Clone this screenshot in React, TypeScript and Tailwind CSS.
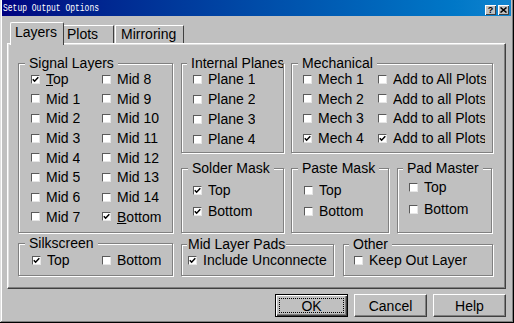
import React from "react";

type ItemProps = { label: React.ReactNode; on?: boolean; clip?: string };

function Box({ on }: { on?: boolean }) {
  return (
    <span className="flex items-center justify-center w-[9px] h-[9px] shrink-0 bg-white border border-t-[#5a5a5a] border-l-[#5a5a5a] border-b-[#e6e6e6] border-r-[#e6e6e6]">
      {on && (
        <svg width="7" height="7" viewBox="0 0 7 7">
          <path d="M0.8 3.2 L2.6 5.2 L6.3 1.2" stroke="#000" strokeWidth="1.5" fill="none" />
        </svg>
      )}
    </span>
  );
}

function Item({ label, on, clip }: ItemProps) {
  return (
    <div className="flex items-center h-4 gap-[6px]">
      <Box on={on} />
      <span className={`whitespace-nowrap overflow-hidden leading-4 ${clip ?? ""}`}>{label}</span>
    </div>
  );
}

function Group({
  title,
  cls,
  legendCls,
  children,
}: {
  title: string;
  cls: string;
  legendCls: string;
  children: React.ReactNode;
}) {
  return (
    <fieldset
      className={`min-w-0 shrink-0 border border-[#808080] shadow-[inset_1px_1px_0_#fff,1px_1px_0_#fff] ${cls}`}
    >
      <legend className={`leading-4 bg-[#c0c0c0] whitespace-nowrap overflow-hidden ${legendCls}`}>{title}</legend>
      {children}
    </fieldset>
  );
}

export default function App() {
  return (
    <div className="w-[514px] h-[323px] bg-[#c0c0c0] overflow-hidden font-['Liberation_Sans',Arial,sans-serif] text-[14px] text-black shadow-[inset_-1px_-1px_0_#000,inset_1px_0_0_#dfdfdf,inset_-2px_-2px_0_#808080,inset_2px_0_0_#fff]">
      {/* title bar */}
      <div className="ml-[2px] mr-[3px] h-[16px] bg-linear-to-r from-[#000080] to-[#1084d0] flex items-end justify-between">
        <span className="pl-[1px] pb-[2px] text-white text-[8px] leading-[8px] font-['Liberation_Mono',monospace] scale-y-[1.3] origin-bottom">
          Setup Output Options
        </span>
        <div className="flex gap-[2px] mr-[2px] pb-[1px]">
          <div className="w-[11px] h-[10px] bg-[#c0c0c0] flex items-center justify-center text-[9px] leading-none font-bold shadow-[inset_1px_1px_0_#fff,inset_-1px_-1px_0_#404040]">
            ?
          </div>
          <div className="w-[11px] h-[10px] bg-[#c0c0c0] flex items-center justify-center shadow-[inset_1px_1px_0_#fff,inset_-1px_-1px_0_#404040]">
            <svg width="7" height="6" viewBox="0 0 7 6">
              <path d="M0.5 0.5 L6.5 5.5 M6.5 0.5 L0.5 5.5" stroke="#000" strokeWidth="1.5" />
            </svg>
          </div>
        </div>
      </div>

      {/* tabs */}
      <div className="flex items-end ml-[10px] mt-[6px] -mb-[2px]">
        <div className="relative z-10 w-[54px] h-[23px] bg-[#c0c0c0] border-t border-l border-white border-r border-r-[#404040] rounded-t-[2px] pl-[4px] pt-[1px] leading-4">
          Layers
        </div>
        <div className="w-[50px] h-[18px] border-t border-white border-r border-r-[#404040] pl-[3px] leading-4 mb-[2px]">
          Plots
        </div>
        <div className="ml-[1px] w-[69px] h-[18px] border-t border-l border-white border-r border-r-[#404040] pl-[5px] leading-4 mb-[2px]">
          Mirroring
        </div>
      </div>

      {/* panel */}
      <div className="ml-[7px] w-[499px] h-[246px] border border-t-white border-l-white border-r-[#404040] border-b-[#404040] shadow-[inset_-1px_-1px_0_#808080,inset_1px_1px_0_#dfdfdf] flex pl-[10px] pt-[11px]">
        {/* left column */}
        <div className="flex flex-col w-[155px]">
          <Group title="Signal Layers" cls="w-[155px] h-[178px]" legendCls="ml-[6px] px-[4px]">
            <div className="flex ml-[12px]">
              <div className="flex flex-col gap-[3.7px] w-[71px]">
                <Item label={<><u>T</u>op</>} on />
                <Item label="Mid 1" />
                <Item label="Mid 2" />
                <Item label="Mid 3" />
                <Item label="Mid 4" />
                <Item label="Mid 5" />
                <Item label="Mid 6" />
                <Item label="Mid 7" />
              </div>
              <div className="flex flex-col gap-[3.7px]">
                <Item label="Mid 8" />
                <Item label="Mid 9" />
                <Item label="Mid 10" />
                <Item label="Mid 11" />
                <Item label="Mid 12" />
                <Item label="Mid 13" />
                <Item label="Mid 14" />
                <Item label={<><u>B</u>ottom</>} on />
              </div>
            </div>
          </Group>
          <Group title="Silkscreen" cls="mt-[2px] w-[155px] h-[41px]" legendCls="ml-[6px] px-[4px]">
            <div className="flex ml-[13px] mt-[1px]">
              <div className="w-[70px]">
                <Item label="Top" on />
              </div>
              <Item label="Bottom" />
            </div>
          </Group>
        </div>

        {/* right column */}
        <div className="flex flex-col ml-[8px]">
          <div className="flex gap-[7px]">
            <Group title="Internal Planes" cls="w-[103px] h-[98px]" legendCls="ml-[5px] px-[4px] max-w-[96px]">
              <div className="flex flex-col gap-[4px] ml-[11px]">
                <Item label="Plane 1" />
                <Item label="Plane 2" />
                <Item label="Plane 3" />
                <Item label="Plane 4" />
              </div>
            </Group>
            <Group title="Mechanical" cls="w-[202px] h-[98px]" legendCls="ml-[6px] px-[4px]">
              <div className="flex ml-[11px]">
                <div className="flex flex-col gap-[3.7px] w-[75px]">
                  <Item label="Mech 1" />
                  <Item label="Mech 2" />
                  <Item label="Mech 3" />
                  <Item label="Mech 4" on />
                </div>
                <div className="flex flex-col gap-[3.7px]">
                  <Item label="Add to All Plots" clip="w-[93px]" />
                  <Item label="Add to all Plots" clip="w-[92px]" />
                  <Item label="Add to all Plots" clip="w-[92px]" />
                  <Item label="Add to all Plots" clip="w-[92px]" on />
                </div>
              </div>
            </Group>
          </div>

          <div className="flex mt-[7px]">
            <Group title="Solder Mask" cls="w-[103px] h-[73px]" legendCls="ml-[6px] px-[4px]">
              <div className="flex flex-col gap-[5px] ml-[11px] mt-[6px]">
                <Item label="Top" on />
                <Item label="Bottom" on />
              </div>
            </Group>
            <Group title="Paste Mask" cls="ml-[7px] w-[98px] h-[73px]" legendCls="ml-[6px] px-[4px]">
              <div className="flex flex-col gap-[5px] ml-[12px] mt-[6px]">
                <Item label="Top" />
                <Item label="Bottom" />
              </div>
            </Group>
            <Group title="Pad Master" cls="ml-[8px] w-[95px] h-[73px]" legendCls="ml-[5px] px-[4px]">
              <div className="flex flex-col gap-[6px] ml-[11px] mt-[3px]">
                <Item label="Top" />
                <Item label="Bottom" />
              </div>
            </Group>
          </div>

          <div className="flex mt-[3px]">
            <Group title="Mid Layer Pads" cls="w-[153px] h-[40px]" legendCls="ml-[5px] px-[1px]">
              <div className="ml-[6px]">
                <Item label="Include Unconnecte" on />
              </div>
            </Group>
            <Group title="Other" cls="ml-[9px] w-[150px] h-[40px]" legendCls="ml-[5px] px-[4px]">
              <div className="ml-[10px]">
                <Item label="Keep Out Layer" />
              </div>
            </Group>
          </div>
        </div>
      </div>

      {/* buttons */}
      <div className="flex justify-end gap-[6px] mr-[8px] mt-[5px]">
        <button className="w-[73px] h-[23px] flex border border-black bg-[#c0c0c0] shadow-[inset_1px_1px_0_#fff,inset_-1px_-1px_0_#404040,inset_-2px_-2px_0_#808080]">
          <span className="flex-1 m-[3px] border border-dotted border-black flex items-center justify-center leading-4">
            OK
          </span>
        </button>
        <button className="w-[73px] h-[23px] flex items-center justify-center bg-[#c0c0c0] border border-t-white border-l-white border-r-[#404040] border-b-[#404040] shadow-[inset_-1px_-1px_0_#808080] leading-4">
          Cancel
        </button>
        <button className="w-[73px] h-[23px] flex items-center justify-center bg-[#c0c0c0] border border-t-white border-l-white border-r-[#404040] border-b-[#404040] shadow-[inset_-1px_-1px_0_#808080] leading-4">
          Help
        </button>
      </div>
    </div>
  );
}
